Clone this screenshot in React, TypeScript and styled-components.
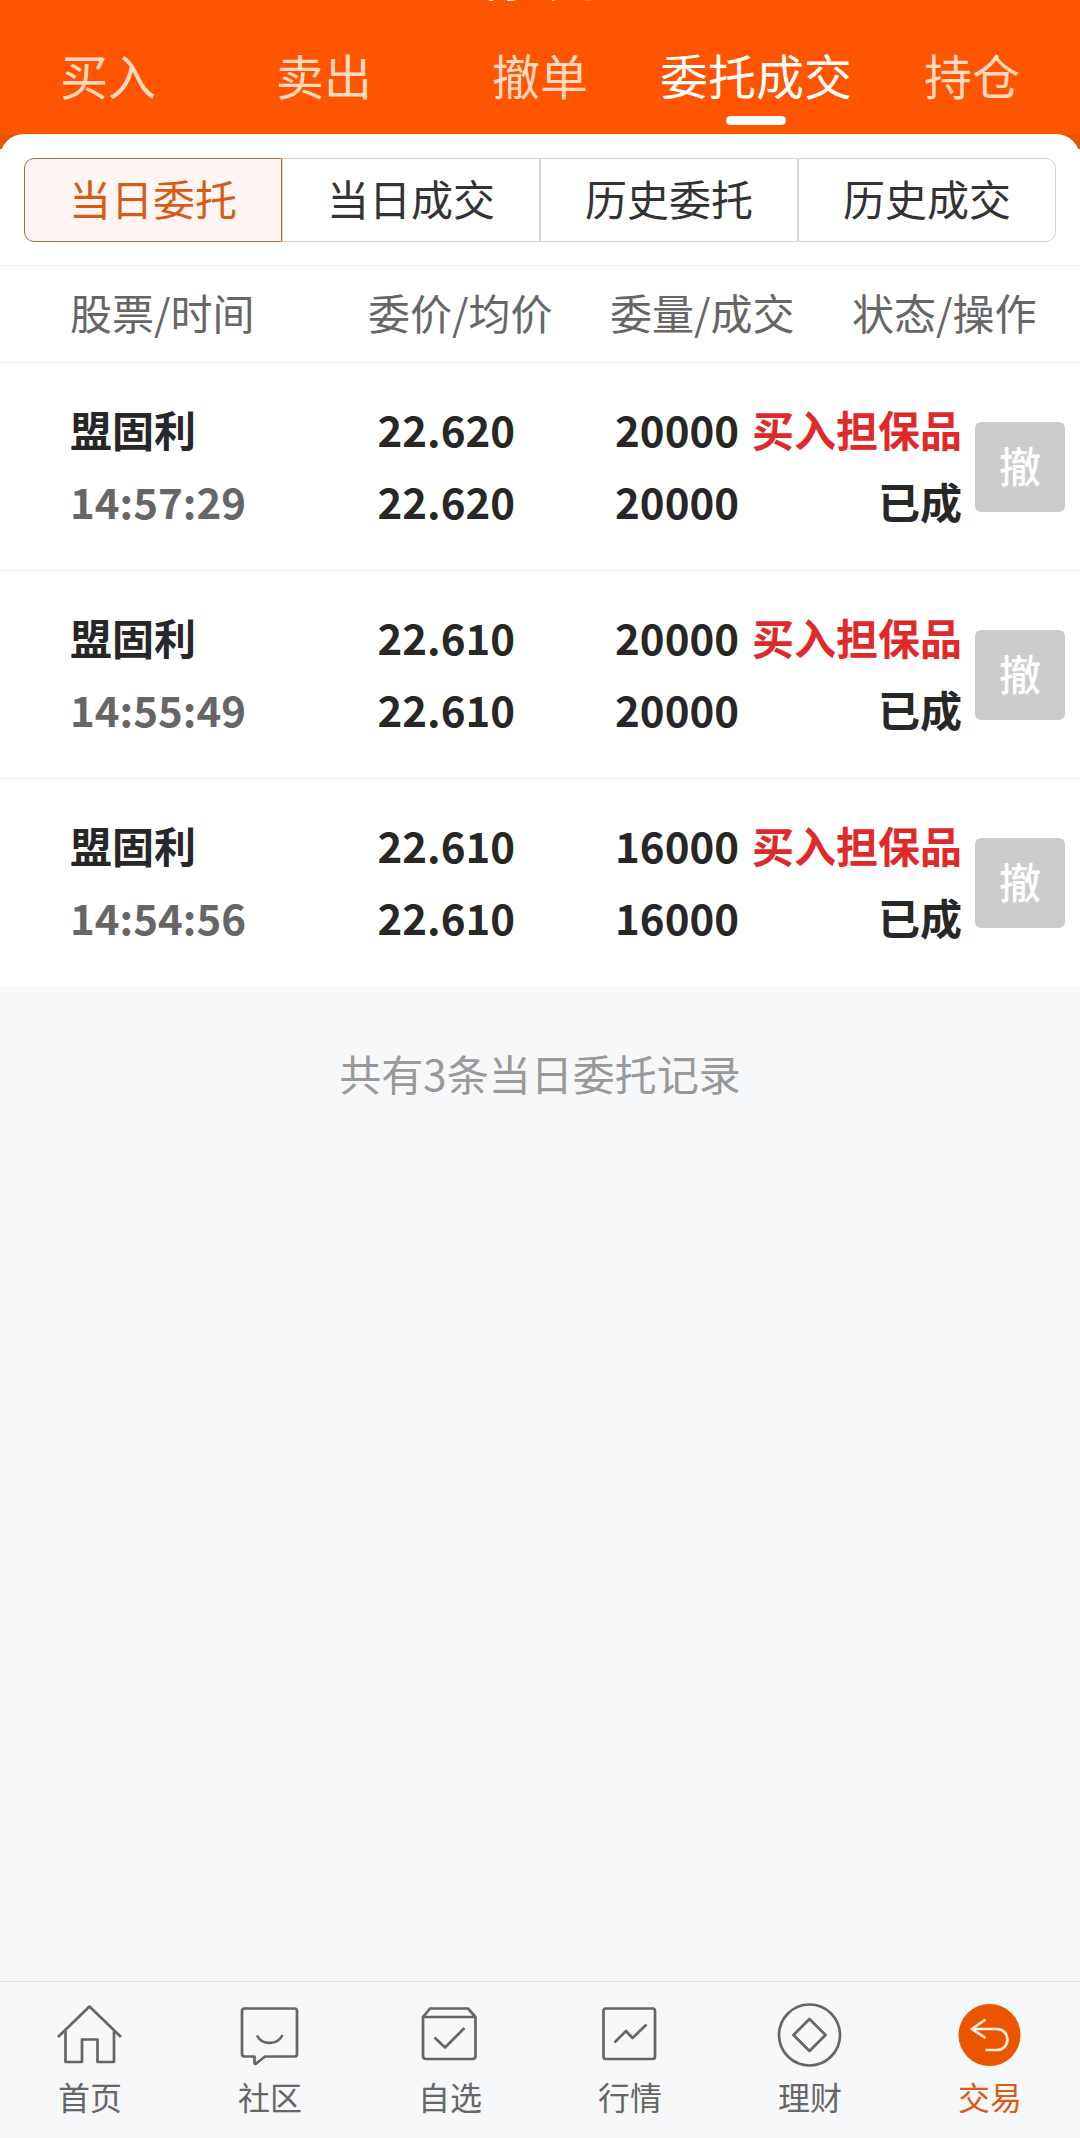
import React from "react";
import styled, { createGlobalStyle } from "styled-components";

const GlobalStyle = createGlobalStyle`
  *, *::before, *::after { box-sizing: border-box; }
  body { margin: 0; background: #f7f8fa; }
  button { font: inherit; border: 0; background: none; padding: 0; cursor: pointer; }
`;

const Page = styled.div`
  min-height: 100vh;
  display: flex;
  flex-direction: column;
  background: #f7f8fa;
  color: #272727;
  font-family: "Noto Sans CJK SC", sans-serif;
  font-size: 42px;
`;

const Header = styled.header`
  background: #ff5500;
`;

const TitleBar = styled.div`
  height: 20px;
  overflow: hidden;
  display: flex;
  flex-direction: column;
  justify-content: flex-end;
  align-items: center;
`;

const Title = styled.h1`
  margin: 0 0 15px;
  font-size: 38px;
  line-height: 48px;
  font-weight: 500;
  color: #fff;
`;

const TradeTabs = styled.nav`
  display: grid;
  grid-template-columns: repeat(5, 1fr);
  height: 114px;
`;

const TradeTab = styled.button<{ $active: boolean }>`
  && {
    display: flex;
    flex-direction: column;
    align-items: center;
    padding-top: 20px;
    font-size: 48px;
    line-height: 68px;
    white-space: nowrap;
    color: ${(p) => (p.$active ? "#fff" : "#ffd9c0")};
  }
  &::after {
    content: "";
    width: 60px;
    height: 9px;
    margin-top: 8px;
    border-radius: 5px;
    background: ${(p) => (p.$active ? "#fff" : "transparent")};
  }
`;

const PanelBackdrop = styled.div`
  background: linear-gradient(#e85400 15px, #fff 15px);
`;

const Panel = styled.section`
  background: #fff;
  border-radius: 24px 24px 0 0;
  padding: 24px 24px 23px;
  border-bottom: 1px solid #f3f3f3;
`;

const Segments = styled.div`
  display: grid;
  grid-template-columns: repeat(4, 1fr);
`;

const Segment = styled.button<{ $active: boolean }>`
  && {
    height: 84px;
    padding-bottom: 4px;
    line-height: 78px;
    border: 1px solid ${(p) => (p.$active ? "#b5683a" : "#d3d6d6")};
    background: ${(p) => (p.$active ? "#fff6f3" : "#fff")};
    color: ${(p) => (p.$active ? "#d95a14" : "#333")};
  }
  &&:first-child { border-radius: 10px 0 0 10px; }
  &&:last-child { border-radius: 0 10px 10px 0; }
`;

const Orders = styled.table`
  display: block;
  background: #fff;
`;
const Head = styled.thead`
  display: block;
`;
const Body = styled.tbody`
  display: block;
`;

const HeadRow = styled.tr`
  display: grid;
  grid-template-columns: 298fr 242fr 242fr 228fr;
  padding-left: 70px;
  height: 97px;
  align-items: center;
  border-bottom: 1px solid #ededed;
`;

const HeadCell = styled.th`
  padding: 0 0 6px;
  text-align: left;
  font-weight: 400;
  white-space: nowrap;
  color: #666;
`;

const Row = styled.tr`
  display: grid;
  grid-template-columns: 210fr 235fr 224fr 223fr 118fr;
  padding-left: 70px;
  height: 208px;
  align-items: center;
  border-bottom: 1px solid #ededed;
  &:last-child { border-bottom-color: #fff; }
`;

const Cell = styled.td<{ $end?: boolean }>`
  display: flex;
  flex-direction: column;
  align-items: ${(p) => (p.$end ? "flex-end" : "flex-start")};
  padding: 0 0 4px;
  font-weight: 700;
  line-height: 72px;
  white-space: nowrap;
`;

const ActionCell = styled(Cell)`
  padding: 0 15px 0 0;
`;

const Muted = styled.span`
  color: #666;
`;
const Side = styled.span`
  color: #e02a2a;
`;

const CancelButton = styled.button`
  && {
    width: 90px;
    height: 90px;
    padding-bottom: 4px;
    border-radius: 6px;
    background: #ccc;
    color: #fff;
    font-weight: 500;
  }
`;

const Summary = styled.p`
  flex: 1;
  margin: 0;
  padding-top: 55px;
  line-height: 62px;
  text-align: center;
  color: #999;
`;

const BottomNav = styled.nav`
  display: grid;
  grid-template-columns: repeat(6, 1fr);
  height: 157px;
  border-top: 1px solid #e3e4e6;
`;

const NavLink = styled.a<{ $active: boolean }>`
  display: flex;
  flex-direction: column;
  align-items: center;
  padding-top: 19px;
  font-size: 32px;
  line-height: 48px;
  text-decoration: none;
  color: ${(p) => (p.$active ? "#dd5a14" : "#666")};
  svg { display: block; margin-bottom: 3px; }
`;

const Icon = ({ children }: { children: React.ReactNode }) => (
  <svg width="68" height="68" viewBox="0 0 68 68" fill="none" stroke="#666" strokeWidth="2.7" strokeLinejoin="round" aria-hidden="true">
    {children}
  </svg>
);

const tabs = ["买入", "卖出", "撤单", "委托成交", "持仓"];
const segments = ["当日委托", "当日成交", "历史委托", "历史成交"];
const columns = ["股票/时间", "委价/均价", "委量/成交", "状态/操作"];
const orders = [
  { name: "盟固利", time: "14:57:29", price: "22.620", volume: "20000" },
  { name: "盟固利", time: "14:55:49", price: "22.610", volume: "20000" },
  { name: "盟固利", time: "14:54:56", price: "22.610", volume: "16000" },
];

const navItems = [
  {
    label: "首页",
    icon: (
      <>
        <path d="M2 36 33.500 5.500 65 36" />
        <path d="M9.500 30V61H26V38.500H41.500V61H58V30" />
      </>
    ),
  },
  {
    label: "社区",
    icon: (
      <>
        <path d="M8.500 7.500H58.500Q61 7.500 61 10V53Q61 55.500 58.500 55.500H29L19.500 63 18.500 62V55.500H8.500Q6 55.500 6 53V10Q6 7.500 8.500 7.500Z" />
        <path d="M21 34.500C26 44.500 41.500 44.500 46.500 34" />
      </>
    ),
  },
  {
    label: "自选",
    icon: (
      <>
        <path d="M7 16 14 7.500H52L59.500 16V55Q59.500 58 56.500 58H10Q7 58 7 55ZM7 16H59.500" />
        <path d="M18.500 36.500 29 46.500 48.500 27" />
      </>
    ),
  },
  {
    label: "行情",
    icon: (
      <>
        <rect x="7.500" y="7.500" width="51.500" height="50.500" rx="2.500" />
        <path d="M18.500 41.500 30 30 36.500 37 50.500 23.500" />
      </>
    ),
  },
  {
    label: "理财",
    icon: (
      <>
        <circle cx="33.500" cy="34" r="30.500" />
        <path d="M33.500 18 49.500 34 33.500 50 17.500 34Z" />
      </>
    ),
  },
  {
    label: "交易",
    icon: (
      <>
        <circle cx="33.500" cy="34" r="31" fill="#eb5500" stroke="none" />
        <path d="M29.500 18.500 16 28 29.500 37M16 28H41A10.500 10.500 0 0 1 41 49H29.500" stroke="#fff0df" strokeLinejoin="miter" />
      </>
    ),
  },
];

export default function App() {
  return (
    <Page>
      <GlobalStyle />
      <Header>
        <TitleBar>
          <Title>何云到</Title>
        </TitleBar>
        <TradeTabs>
          {tabs.map((t) => (
            <TradeTab key={t} type="button" $active={t === "委托成交"}>
              {t}
            </TradeTab>
          ))}
        </TradeTabs>
      </Header>
      <PanelBackdrop>
        <Panel>
          <Segments>
            {segments.map((s, i) => (
              <Segment key={s} type="button" $active={i === 0}>
                {s}
              </Segment>
            ))}
          </Segments>
        </Panel>
      </PanelBackdrop>
      <Orders>
        <Head>
          <HeadRow>
            {columns.map((c) => (
              <HeadCell key={c} scope="col">
                {c}
              </HeadCell>
            ))}
          </HeadRow>
        </Head>
        <Body>
          {orders.map((o) => (
            <Row key={o.time}>
              <Cell>
                <span>{o.name}</span>
                <Muted>{o.time}</Muted>
              </Cell>
              <Cell $end>
                <span>{o.price}</span>
                <span>{o.price}</span>
              </Cell>
              <Cell $end>
                <span>{o.volume}</span>
                <span>{o.volume}</span>
              </Cell>
              <Cell $end>
                <Side>买入担保品</Side>
                <span>已成</span>
              </Cell>
              <ActionCell $end>
                <CancelButton type="button">撤</CancelButton>
              </ActionCell>
            </Row>
          ))}
        </Body>
      </Orders>
      <Summary>共有3条当日委托记录</Summary>
      <BottomNav>
        {navItems.map((n) => (
          <NavLink key={n.label} href="#" $active={n.label === "交易"}>
            <Icon>{n.icon}</Icon>
            {n.label}
          </NavLink>
        ))}
      </BottomNav>
    </Page>
  );
}
